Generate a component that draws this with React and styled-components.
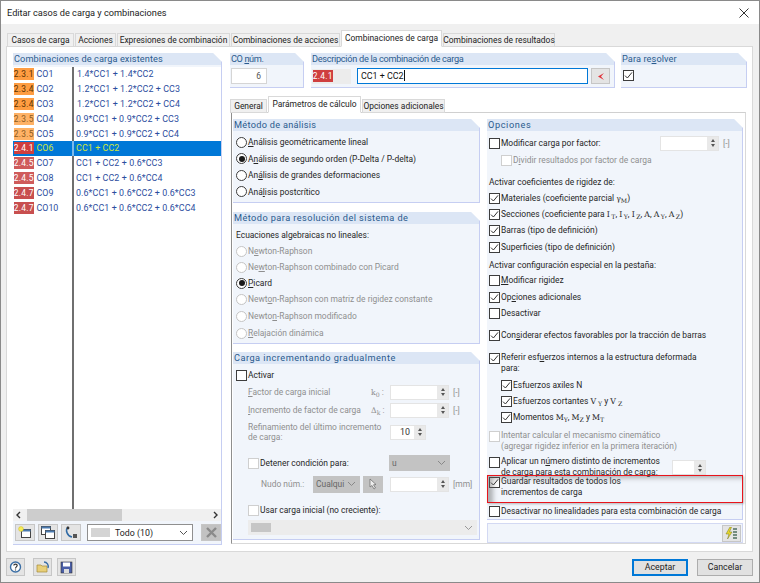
import React from 'react';
import styled, { createGlobalStyle } from 'styled-components';

const Global = createGlobalStyle`
  html, body { margin: 0; padding: 0; background: #fff; }
  body { font-family: Roboto, "Open Sans", sans-serif; font-size: 8.45px; color: #222; }
  u { text-underline-offset: 1px; }
`;
const Win = styled.div`
  width: 760px; height: 583px; box-sizing: border-box; border: 1px solid #8a8a8a;
  display: flex; flex-direction: column; background: #f0f0f0; overflow: hidden; position: relative;
`;
const TitleBar = styled.div`
  height: 23px; flex: none; background: #fff; display: flex; align-items: center; justify-content: space-between;
  padding: 0 10px 0 6px; font-size: 9.2px; color: #1c1c1c;
`;
const Tabs = styled.div`
  display: flex; align-items: flex-end; height: ${p => p.$h || 22}px; flex: none; padding-left: ${p => p.$left ?? 6}px; gap: 1px; position: relative; z-index: 1;
`;
const Tab = styled.div`
  width: ${p => p.$w}px; height: ${p => (p.$active ? 17 : 14)}px; box-sizing: border-box; background: ${p => (p.$active ? '#fff' : '#f0f0f0')};
  border: 1px solid #d9d9d9; border-bottom: ${p => (p.$active ? '1px solid #fff' : '1px solid #d9d9d9')};
  margin-bottom: -1px; padding-bottom: 1px; display: flex; align-items: center; justify-content: center; white-space: nowrap; color: #222;
`;
const MainPanel = styled.div`
  margin: 0 6px 0 5px; height: 506px; flex: none; box-sizing: border-box; background: #fff; border: 1px solid #d9d9d9;
  display: flex; padding: 6px 6px 6px 6px; gap: 8px;
`;
const LeftCol = styled.div`width: 209px; flex: none; display: flex; flex-direction: column;`;
const RightCol = styled.div`flex: 1; display: flex; flex-direction: column; min-width: 0;`;
const Group = styled.div`
  width: ${p => (p.$w ? `${p.$w}px` : 'auto')}; height: ${p => (p.$h ? `${p.$h}px` : 'auto')}; flex: ${p => (p.$grow ? 1 : 'none')};
  margin-top: ${p => p.$mt || 0}px; margin-left: ${p => p.$ml || 0}px; box-sizing: border-box; display: flex; flex-direction: column; background: #f1f5fb;
  border-right: 1px solid #c6cef2; border-bottom: 1px solid #c6cef2;
  clip-path: polygon(0 0, calc(100% - 9px) 0, 100% 9px, 100% 100%, 0 100%);
`;
const GroupHead = styled.div`
  height: 12px; flex: none; background: #dce6f5; color: #2b5b8e; line-height: 12px; padding-left: 1px; white-space: nowrap;
  font-size: 9.2px; letter-spacing: ${p => p.$ls || 0}px;
`;
const GroupBody = styled.div`flex: 1; display: flex; flex-direction: column; padding: ${p => p.$pad || '3px 3px'}; min-height: 0; min-width: 0; position: relative;`;
const List = styled.div`flex: 1; background: #fff; display: flex; flex-direction: column; margin-top: 2px; color: #2c4d9e; font-size: 8.9px;`;
const ListRow = styled.div`
  height: 14.8px; flex: none; display: flex; align-items: center; background: ${p => (p.$sel ? '#0078d7' : 'transparent')}; color: ${p => (p.$sel ? '#cfe63a' : 'inherit')};
`;
const CodeCell = styled.div`width: 59px; height: 100%; flex: none; display: flex; align-items: center; padding-left: 1px; box-sizing: border-box; gap: 3px;`;
const Divider = styled.div`width: 2px; align-self: stretch; flex: none; background: ${p => (p.$sel ? '#7db9ea' : '#6f6f6f')};`;
const Expr = styled.div`padding-left: ${p => p.$pad}px; white-space: nowrap; letter-spacing: .1px;`;
const Badge = styled.span`
  width: 19.5px; height: 12px; background: ${p => p.$c}; color: ${p => p.$t}; display: inline-flex; align-items: center; justify-content: center;
  font-size: 8.4px; letter-spacing: .3px; flex: none; white-space: nowrap;
`;
const Filler = styled.div`flex: 1; display: flex;`;
const FillerLeft = styled.div`width: 59px;`;
const ScrollBar = styled.div`height: 12px; flex: none; background: #f0f0f0; display: flex; align-items: center; justify-content: space-between; position: relative; padding: 0 3px;`;
const Thumb = styled.div`position: absolute; left: 14px; top: 0; width: 95px; height: 12px; background: #cdcdcd;`;
const Toolbar = styled.div`height: 23px; flex: none; display: flex; align-items: center; padding-left: 2px; box-sizing: border-box;`;
const ToolBtn = styled.div`
  width: ${p => p.$w || 20}px; height: ${p => p.$h || 17}px; flex: none; box-sizing: border-box; margin-left: ${p => p.$ml || 0}px;
  background: ${p => p.$bg || '#e4e4e4'}; border: 1px solid #c6c6c6; display: flex; align-items: center; justify-content: center;
`;
const FilterSelect = styled.div`
  width: 106px; height: 17px; margin-left: 6px; box-sizing: border-box; background: #fff; border: 1px solid #8f8f8f; display: flex; align-items: center; padding: 0 4px 0 3px; flex: none;
`;
const FilterText = styled.span`flex: 1; padding-left: 2px; font-size: 8.8px;`;
const Swatch = styled.span`width: ${p => p.$w}px; height: 9px; background: ${p => p.$c || '#d4d4d4'}; flex: none; margin-right: 3px;`;
const TopRow = styled.div`display: flex; height: 35px; flex: none;`;
const NumBox = styled.div`
  width: 36px; height: 16px; margin-left: 1px; box-sizing: border-box; background: #fff; border: 1px solid #d5d5d5; color: #555; text-align: right; padding-right: 5px; line-height: 14px;
`;
const DescRow = styled.div`display: flex; align-items: center; gap: 6px;`;
const CodeBox = styled.div`width: 39px; height: 15px; background: #ececec; display: flex; align-items: center; padding-left: 1px; box-sizing: border-box;`;
const TextInput = styled.div`
  width: 231px; height: 16px; box-sizing: border-box; background: #fff; border: 1px solid #0078d7; padding-left: 3px; line-height: 14px; color: #111; margin-right: -3px; font-size: 8.9px;
`;
const Caret = styled.span`display: inline-block; width: 1px; height: 11px; background: #111; vertical-align: -2px;`;
const SubPanel = styled.div`
  height: 432px; flex: none; box-sizing: border-box; background: #fff; border: 1px solid #d9d9d9; border-left-color: #8e8e8e; border-top-color: #d0d0d0;
  display: flex; padding: 6px 3px 3px 1px; gap: 7px; margin-left: 1px;
`;
const PanelCol = styled.div`width: ${p => p.$w}px; flex: none; display: flex; flex-direction: column;`;
const Line = styled.div`
  height: ${p => p.$h || 16}px; flex: none; display: flex; align-items: ${p => (p.$top ? 'flex-start' : 'center')}; margin-top: ${p => p.$mt || 0}px; padding-left: ${p => p.$in || 0}px;
  color: ${p => (p.$off ? '#8f8f8f' : '#262626')}; white-space: nowrap; position: relative;
`;
const Radio = styled.span`
  width: 11px; height: 11px; box-sizing: border-box; border-radius: 50%; border: 1px solid ${p => (p.$off ? '#c4c4c4' : '#3d3d3d')}; background: #fff;
  flex: none; margin-right: 1px; display: flex; align-items: center; justify-content: center;
  &::after { content: ''; display: ${p => (p.$on ? 'block' : 'none')}; width: 6px; height: 6px; border-radius: 50%; background: #1a1a1a; }
`;
const Box = styled.span`
  width: 11px; height: 11px; box-sizing: border-box; border: 1px solid ${p => (p.$off ? '#cfcfcf' : '#3d3d3d')}; background: #fff; flex: none; margin-right: 1px; margin-top: ${p => p.$mt || 0}px; display: flex; align-items: center; justify-content: center;
`;
const Sub = styled.span`font-family: "DejaVu Serif", serif; font-size: 6.2px; position: relative; top: 1.5px;`;
const Sym = styled.span`font-family: "DejaVu Serif", serif; font-size: 7.8px; letter-spacing: ${p => p.$ls || 0}px;`;
const Two = styled.div`line-height: 10.5px; white-space: nowrap; width: ${p => (p.$w ? `${p.$w}px` : 'auto')}; flex: none;`;
const Label = styled.span`width: ${p => p.$w}px; flex: none; display: inline-block; color: ${p => p.$c || 'inherit'};`;
const SpinWrap = styled.div`
  width: ${p => p.$w}px; height: 15px; flex: none; box-sizing: border-box; background: #fff; display: flex; border: 1px solid #e4e4e4; margin-left: ${p => p.$ml || 0}px; margin-top: ${p => p.$mt || 0}px;
`;
const SpinVal = styled.div`flex: 1; text-align: right; padding-right: 4px; line-height: 13px; color: #333; font-size: 8.9px;`;
const SpinBtns = styled.div`width: 11px; flex: none; background: #e9e9e9; display: flex; flex-direction: column; align-items: center; justify-content: center; gap: 2px;`;
const Up = styled.span`width: 0; height: 0; border: 2.5px solid transparent; border-top: 0; border-bottom: 3px solid #555;`;
const Down = styled.span`width: 0; height: 0; border: 2.5px solid transparent; border-bottom: 0; border-top: 3px solid #555;`;
const Unit = styled.span`margin-left: 4px; color: #8f8f8f;`;
const GraySelect = styled.div`
  width: ${p => p.$w}px; height: ${p => p.$h || 16}px; flex: none; box-sizing: border-box; background: ${p => p.$bg || '#c3c3c3'}; color: #666; display: flex; align-items: center; justify-content: ${p => (p.$center ? 'center' : 'space-between')}; padding: ${p => (p.$center ? '0' : '0 4px 0 3px')}; margin-left: ${p => p.$ml || 0}px; overflow: hidden;
`;
const Highlight = styled.div`
  position: absolute; left: 486px; top: 474px; width: 256px; height: 28px; box-sizing: border-box; border: 1.5px solid #e8141c;
  box-shadow: inset 7px 4px 5px -2px rgba(90,90,90,.45), 1px 1px 2px rgba(90,90,90,.4); pointer-events: none;
`;
const IconBar = styled.div`height: 20px; flex: none; margin-top: 3px; box-sizing: border-box; background: #f1f5fb; border: 1px solid #d3d9f3; display: flex; justify-content: flex-end; align-items: center; padding-right: 1px;`;
const Footer = styled.div`flex: 1; display: flex; align-items: center; padding: 0 6px 0 5px;`;
const Spacer = styled.div`flex: 1;`;
const DlgBtn = styled.div`
  width: 56px; height: 17px; box-sizing: border-box; background: #e1e1e1; border: ${p => (p.$pri ? '2px solid #0078d7' : '1px solid #adadad')}; margin-left: ${p => p.$ml || 0}px;
  display: flex; align-items: center; justify-content: center; color: #1c1c1c; font-size: 8.8px;
`;

const Check = () => (
  <svg width="9" height="9" viewBox="0 0 9 9"><path d="M1 4.6 L3.4 7 L8 1.4" fill="none" stroke="#333" strokeWidth="1" /></svg>
);
const Chevron = ({ c = '#555' }) => (
  <svg width="9" height="6" viewBox="0 0 9 6"><path d="M1 1 L4.5 4.5 L8 1" fill="none" stroke={c} strokeWidth="1" /></svg>
);
const ChkRow = ({ on, off, children, ...rest }) => (
  <Line $off={off} {...rest}><Box $off={off}>{on && <Check />}</Box><span>{children}</span></Line>
);
const RadRow = ({ on, off, children, ...rest }) => (
  <Line $off={off} {...rest}><Radio $on={on} $off={off} /><span>{children}</span></Line>
);
const Spin = ({ w, val, ml, mt }) => (
  <SpinWrap $w={w} $ml={ml} $mt={mt}><SpinVal>{val}</SpinVal><SpinBtns><Up /><Down /></SpinBtns></SpinWrap>
);

const rows = [
  ['2.3.1', '#ff9d42', '#5a3200', 'CO1', '1.4*CC1 + 1.4*CC2', 3],
  ['2.3.4', '#ff9d42', '#5a3200', 'CO2', '1.2*CC1 + 1.2*CC2 + CC3', 3],
  ['2.3.4', '#ff9d42', '#5a3200', 'CO3', '1.2*CC1 + 1.2*CC2 + CC4', 3],
  ['2.3.5', '#ffb266', '#8a5a20', 'CO4', '0.9*CC1 + 0.9*CC2 + CC3', 2],
  ['2.3.5', '#ffb266', '#8a5a20', 'CO5', '0.9*CC1 + 0.9*CC2 + CC4', 2],
  ['2.4.1', '#cf3f3f', '#fff', 'CO6', 'CC1 + CC2', 2, true],
  ['2.4.5', '#cf5b5b', '#fff', 'CO7', 'CC1 + CC2 + 0.6*CC3', 2],
  ['2.4.5', '#cf5b5b', '#fff', 'CO8', 'CC1 + CC2 + 0.6*CC4', 2],
  ['2.4.7', '#c84f4f', '#fff', 'CO9', '0.6*CC1 + 0.6*CC2 + 0.6*CC3', 2],
  ['2.4.7', '#c84f4f', '#fff', 'CO10', '0.6*CC1 + 0.6*CC2 + 0.6*CC4', 2],
];

export default function App() {
  return (
    <Win>
      <Global />
      <TitleBar>
        <span>Editar casos de carga y combinaciones</span>
        <svg width="10" height="10" viewBox="0 0 10 10"><path d="M.5 .5 L9.5 9.5 M9.5 .5 L.5 9.5" stroke="#333" strokeWidth="1" /></svg>
      </TitleBar>
      <Tabs>
        <Tab $w={67}>Casos de carga</Tab>
        <Tab $w={41}>Acciones</Tab>
        <Tab $w={113}>Expresiones de combinación</Tab>
        <Tab $w={109}>Combinaciones de acciones</Tab>
        <Tab $w={101} $active>Combinaciones de carga</Tab>
        <Tab $w={112}>Combinaciones de resultados</Tab>
      </Tabs>
      <MainPanel>
        <LeftCol>
          <Group $grow>
            <GroupHead $ls={0.1}>Combinaciones de carga existentes</GroupHead>
            <List>
              {rows.map(r => (
                <ListRow key={r[3]} $sel={r[6]}>
                  <CodeCell><Badge $c={r[1]} $t={r[2]}>{r[0]}</Badge><span>{r[3]}</span></CodeCell>
                  <Divider $sel={r[6]} />
                  <Expr $pad={r[5]}>{r[4]}</Expr>
                </ListRow>
              ))}
              <Filler><FillerLeft /><Divider /></Filler>
            </List>
            <ScrollBar>
              <Thumb />
              <svg width="5" height="8" viewBox="0 0 5 8"><path d="M4 1 L1 4 L4 7" fill="none" stroke="#333" strokeWidth="1.4" /></svg>
              <svg width="5" height="8" viewBox="0 0 5 8"><path d="M1 1 L4 4 L1 7" fill="none" stroke="#333" strokeWidth="1.4" /></svg>
            </ScrollBar>
            <Toolbar>
              <ToolBtn>
                <svg width="14" height="13" viewBox="0 0 14 13"><rect x="3.5" y="3.5" width="9" height="8" fill="#fff" stroke="#444" /><rect x="3.5" y="3.5" width="9" height="2" fill="#4a7ab0" /><circle cx="3" cy="3" r="2.4" fill="#f6ee5a" stroke="#d0b820" strokeWidth=".5" /></svg>
              </ToolBtn>
              <ToolBtn $ml={3}>
                <svg width="14" height="13" viewBox="0 0 14 13"><rect x=".5" y=".5" width="9" height="8" fill="#fff" stroke="#444" /><rect x=".5" y=".5" width="9" height="2" fill="#4a7ab0" /><rect x="4.5" y="4.5" width="9" height="8" fill="#fff" stroke="#444" /><rect x="4.5" y="4.5" width="9" height="2" fill="#4a7ab0" /></svg>
              </ToolBtn>
              <ToolBtn $ml={3}>
                <svg width="14" height="13" viewBox="0 0 14 13"><path d="M4 1 C1 4 3 10 8 11" fill="none" stroke="#2f6aa5" strokeWidth="1.6" /><circle cx="4" cy="2" r="1.4" fill="#333" /><rect x="9" y="8" width="4" height="4" fill="#555" /></svg>
              </ToolBtn>
              <FilterSelect><Swatch $w={19} /><FilterText>Todo (10)</FilterText><Chevron /></FilterSelect>
              <ToolBtn $ml={8} $bg="#c2c2c2">
                <svg width="11" height="11" viewBox="0 0 11 11"><path d="M1 1 L10 10 M10 1 L1 10" stroke="#8a8a8a" strokeWidth="2.4" /></svg>
              </ToolBtn>
            </Toolbar>
          </Group>
        </LeftCol>
        <RightCol>
          <TopRow>
            <Group $w={74}>
              <GroupHead $ls={-0.4}>CO <u>n</u>úm.</GroupHead>
              <GroupBody $pad="3px 0 0 0"><NumBox>6</NumBox></GroupBody>
            </Group>
            <Group $w={304} $ml={7}>
              <GroupHead $ls={-0.3}>Descripción de la combinación de carga</GroupHead>
              <GroupBody $pad="3px 0 0 1px">
                <DescRow>
                  <CodeBox><Badge $c="#cf3f3f" $t="#fff">2.4.1</Badge></CodeBox>
                  <TextInput>CC1 + CC2<Caret /></TextInput>
                  <ToolBtn $w={19} $h={16}>
                    <svg width="9" height="9" viewBox="0 0 9 9"><path d="M8 1 L2 4.5 L8 8 L5 4.5 Z" fill="#e0343c" /></svg>
                  </ToolBtn>
                </DescRow>
              </GroupBody>
            </Group>
            <Group $w={126} $ml={6}>
              <GroupHead $ls={0.1}>Para re<u>s</u>olver</GroupHead>
              <GroupBody $pad="5px 0 0 2px"><Line $h={11}><Box><Check /></Box></Line></GroupBody>
            </Group>
          </TopRow>
          <Tabs $left={0} $h={24}>
            <Tab $w={37}>General</Tab>
            <Tab $w={93} $active>Parámetros de cálculo</Tab>
            <Tab $w={83}>Opciones adicionales</Tab>
          </Tabs>
          <SubPanel>
            <PanelCol $w={247}>
              <Group $h={84}>
                <GroupHead $ls={0.28}>Método de análisis</GroupHead>
                <GroupBody>
                  <RadRow><u>A</u>nálisis geométricamente lineal</RadRow>
                  <RadRow on $mt={0.5}>A<u>n</u>álisis de segundo orden (P-Delta / P-delta)</RadRow>
                  <RadRow $mt={0.5}>An<u>á</u>lisis de grandes deformaciones</RadRow>
                  <RadRow $mt={0.5}>Aná<u>l</u>isis postcrítico</RadRow>
                </GroupBody>
              </Group>
              <Group $h={132} $mt={9}>
                <GroupHead $ls={0.43}>Método para resolución del sistema de</GroupHead>
                <GroupBody>
                  <Line>Ecuaciones algebraicas no lineales:</Line>
                  <RadRow off>N<u>e</u>wton-Raphson</RadRow>
                  <RadRow off>Ne<u>w</u>ton-Raphson combinado con Picard</RadRow>
                  <RadRow on><u>P</u>icard</RadRow>
                  <RadRow off>Newt<u>o</u>n-Raphson con matriz de rigidez constante</RadRow>
                  <RadRow off $mt={1}>Newto<u>n</u>-Raphson modificado</RadRow>
                  <RadRow off $mt={1}><u>R</u>elajación dinámica</RadRow>
                </GroupBody>
              </Group>
              <Group $grow $mt={8}>
                <GroupHead $ls={0.47}>Carga incrementando gradualmente</GroupHead>
                <GroupBody>
                  <ChkRow>Activar</ChkRow>
                  <Line $off $in={12} $mt={1}>
                    <Label $w={123}><u>F</u>actor de carga inicial</Label>
                    <Label $w={19}><Sym>k</Sym><Sub>0</Sub>&nbsp;:</Label>
                    <Spin w={59} /><Unit>[-]</Unit>
                  </Line>
                  <Line $off $in={12} $mt={2}>
                    <Label $w={123}><u>I</u>ncremento de factor de carga</Label>
                    <Label $w={19}><Sym>Δ</Sym><Sub>k</Sub>&nbsp;:</Label>
                    <Spin w={59} /><Unit>[-]</Unit>
                  </Line>
                  <Line $off $in={12} $h={22} $mt={3}>
                    <Label $w={142}><Two>Refinamiento del último incremento<br />de carga:</Two></Label>
                    <Spin w={36} val="10" />
                  </Line>
                  <Line $off $in={12} $mt={12}>
                    <Box $off />
                    <Label $w={129} $c="#262626">Detener condición para:</Label>
                    <GraySelect $w={61}>u<Chevron c="#888" /></GraySelect>
                  </Line>
                  <Line $off $in={25} $h={18} $mt={4}>
                    <Label $w={52}>Nudo núm.:</Label>
                    <GraySelect $w={47} $h={17}>Cualqui<Chevron c="#888" /></GraySelect>
                    <GraySelect $w={20} $h={17} $ml={3} $center>
                      <svg width="12" height="12" viewBox="0 0 12 12"><path d="M3 1 L3 9 L5 7.5 L7 11 L8.5 10 L6.5 6.8 L9 6.5 Z" fill="#eee" stroke="#666" strokeWidth=".7" /></svg>
                    </GraySelect>
                    <Spin w={59} ml={7} /><Unit>[mm]</Unit>
                  </Line>
                  <Line $off $in={12} $mt={9}><Box $off /><Label $w={200} $c="#262626">Usar carga inicial (no creciente):</Label></Line>
                  <Line $h={15} $mt={2}>
                    <GraySelect $w={229} $h={15} $ml={12} $bg="#ececec"><Swatch $w={20} $c="#c6c6c6" /><Chevron c="#999" /></GraySelect>
                  </Line>
                </GroupBody>
              </Group>
            </PanelCol>
            <PanelCol $w={256}>
              <Group $grow>
                <GroupHead $ls={0.6}>Opciones</GroupHead>
                <GroupBody $pad="4px 0 0 2px">
                  <Line>
                    <Box />
                    <Label $w={159}>Modificar carga por factor:</Label>
                    <Spin w={59} /><Unit>[-]</Unit>
                  </Line>
                  <ChkRow off $in={12} $mt={1}>D<u>i</u>vidir resultados por factor de carga</ChkRow>
                  <Line $mt={6}>Activar coeficientes de rigidez de:</Line>
                  <ChkRow on>Materiales (coeficiente parcial <Sym>γ</Sym><Sub>M</Sub>)</ChkRow>
                  <ChkRow on>Secciones (coeficiente para <Sym $ls={1.5}>I</Sym><Sub>T</Sub>, <Sym $ls={1.5}>I</Sym><Sub>Y</Sub>, <Sym $ls={1.5}>I</Sym><Sub>Z</Sub>, <Sym>A</Sym>, <Sym $ls={1.5}>A</Sym><Sub>Y</Sub>, <Sym $ls={1.5}>A</Sym><Sub>Z</Sub>)</ChkRow>
                  <ChkRow on>Barras (tipo de definición)</ChkRow>
                  <ChkRow on $mt={1}>Superficies (tipo de definición)</ChkRow>
                  <Line $mt={2}>Activar configuración especial en la pestaña:</Line>
                  <ChkRow $mt={-1}><u>M</u>odificar rigidez</ChkRow>
                  <ChkRow on $mt={1}>Op<u>c</u>iones adicionales</ChkRow>
                  <ChkRow>Desactivar</ChkRow>
                  <ChkRow on $mt={6}>Con<u>s</u>iderar efectos favorables por la tracción de barras</ChkRow>
                  <Line $h={22} $mt={9} $top><Box $mt={1}><Check /></Box><Two>Referir esf<u>u</u>erzos internos a la estructura deformada<br />para:</Two></Line>
                  <ChkRow on $in={12} $mt={3}>Esfuerzos axiles N</ChkRow>
                  <ChkRow on $in={12}>Esfuerzos cortantes <Sym $ls={2}>V</Sym><Sub>Y</Sub>&nbsp;y <Sym $ls={2}>V</Sym><Sub>Z</Sub></ChkRow>
                  <ChkRow on $in={12}>Momentos <Sym>M</Sym><Sub>Y</Sub>, <Sym>M</Sym><Sub>Z</Sub>&nbsp;y <Sym>M</Sym><Sub>T</Sub></ChkRow>
                  <Line $off $h={22} $mt={5} $top><Box $off $mt={1} /><Two>Intentar calcular el mecanismo cinemático<br />(agregar rigidez inferior en la primera iteración)</Two></Line>
                  <Line $h={20} $mt={4} $top>
                    <Box $mt={1} /><Two $w={171}>Aplicar un n<u>ú</u>mero distinto de incrementos<br />de carga para esta combinación de carga:</Two>
                    <Spin w={34} mt={4} />
                  </Line>
                  <Line $h={22} $top><Box $mt={1}><Check /></Box><Two>Guardar resultados de todos los<br />incrementos de carga</Two></Line>
                  <ChkRow $mt={5}>Desactivar no linealidades para esta combinación de carga</ChkRow>
                </GroupBody>
              </Group>
              <IconBar>
                <ToolBtn $w={19} $h={17}>
                  <svg width="13" height="13" viewBox="0 0 13 13"><path d="M5 0 L1 7 L4 7 L2.5 12 L7 5 L4.5 5 L6.5 0 Z" fill="#e8d82a" stroke="#7a7a20" strokeWidth=".5" /><path d="M8 2 H12 M8 5 H12 M8 8 H12 M8 11 H12" stroke="#4f6f5f" strokeWidth="1.5" /></svg>
                </ToolBtn>
              </IconBar>
            </PanelCol>
          </SubPanel>
        </RightCol>
      </MainPanel>
      <Footer>
        <ToolBtn $w={19} $h={18}>
          <svg width="13" height="13" viewBox="0 0 13 13"><circle cx="6.5" cy="6" r="5" fill="#fff" stroke="#3a6ea5" strokeWidth="1.4" /><path d="M4.8 4.6 C4.8 2.6 8.2 2.6 8.2 4.6 C8.2 5.8 6.5 6 6.5 7.4 M6.5 8.4 V9.4" fill="none" stroke="#333" strokeWidth="1.2" /></svg>
        </ToolBtn>
        <ToolBtn $w={19} $h={18} $ml={8}>
          <svg width="14" height="13" viewBox="0 0 14 13"><path d="M1 4 H5 L6 5 H11 V11 H1 Z" fill="#e8cf78" stroke="#a58a3a" strokeWidth=".7" /><path d="M8 1 C11 1 13 4 12 7" fill="none" stroke="#3a6ea5" strokeWidth="1.4" /></svg>
        </ToolBtn>
        <ToolBtn $w={19} $h={18} $ml={5}>
          <svg width="13" height="13" viewBox="0 0 13 13"><rect x="1" y="1" width="11" height="11" fill="#4a5fa8" stroke="#333" strokeWidth=".6" /><rect x="3" y="1.5" width="7" height="4" fill="#fff" /><rect x="4" y="8" width="5" height="4" fill="#ddd" /></svg>
        </ToolBtn>
        <Spacer />
        <DlgBtn $pri>Aceptar</DlgBtn>
        <DlgBtn $ml={9}>Cancelar</DlgBtn>
      </Footer>
      <Highlight />
    </Win>
  );
}
